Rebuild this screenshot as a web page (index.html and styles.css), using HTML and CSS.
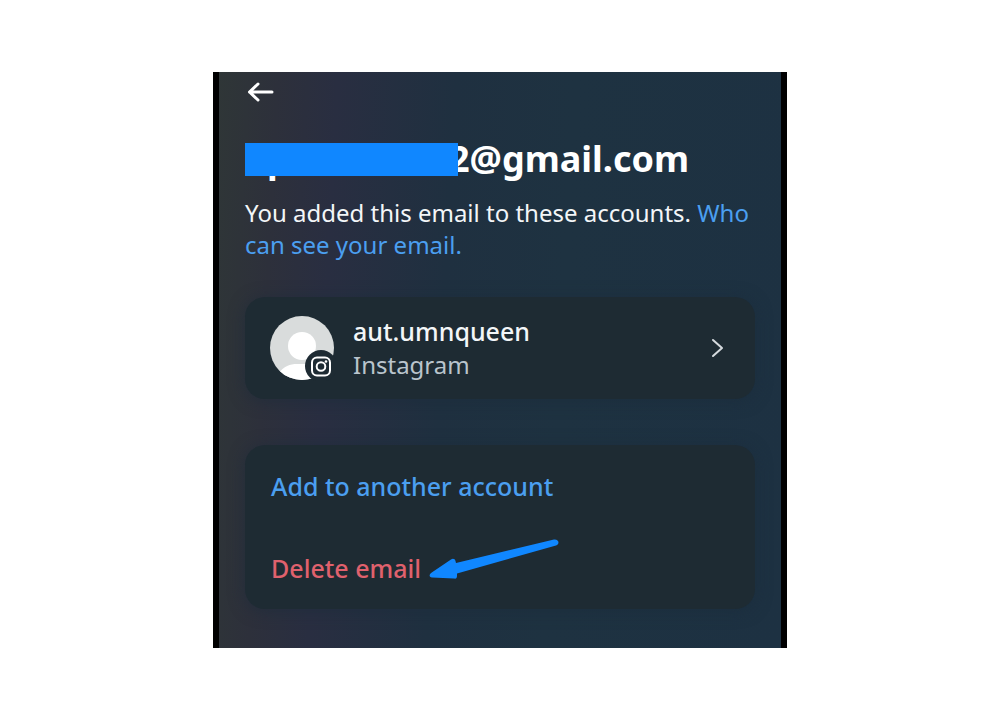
FILE: index.html
```html
<!DOCTYPE html>
<html lang="en">
<head>
    <meta charset="UTF-8">
    <title>Email</title>
    <link rel="stylesheet" href="styles.css">
</head>
<body>
<main class="screen">

    <button class="back" type="button" aria-label="Back">
        <svg width="30" height="24" viewBox="0 0 30 24">
            <path d="M27 12H4.500M13 4L4.500 12L13 20"/>
        </svg>
    </button>

    <h1 class="email"><span class="mask">p</span><span class="domain">2@gmail.com</span></h1>
    <p class="desc">You added this email to these accounts. <a href="#">Who can see your email.</a></p>

    <a class="card account" href="#">
        <svg class="avatar" width="66" height="66" viewBox="0 -1 66 66">
            <defs>
                <clipPath id="face"><circle cx="32" cy="32" r="32"/></clipPath>
            </defs>
            <g clip-path="url(#face)">
                <rect width="64" height="64" fill="#d9dcdc"/>
                <circle cx="32" cy="30" r="14" fill="#fff"/>
                <path d="M8 58C14 50 20 48 27 48H40C48 48 54 52 58 64H8Z" fill="#fff"/>
            </g>
            <circle cx="51" cy="50" r="16" fill="#1e2b33"/>
            <rect x="42" y="41.500" width="18" height="18" rx="5" fill="none" stroke="#fff" stroke-width="2"/>
            <circle cx="51" cy="50.500" r="4.300" fill="none" stroke="#fff" stroke-width="2"/>
            <circle cx="56" cy="45.500" r="1.300" fill="#fff"/>
        </svg>
        <span class="info">
            <strong>aut.umnqueen</strong>
            <span>Instagram</span>
        </span>
        <svg class="chevron" width="14" height="20" viewBox="0 0 14 20">
            <path d="M2 2L11 10L2 18"/>
        </svg>
    </a>

    <div class="card actions">
        <button class="add" type="button">Add to another account</button>
        <button class="delete" type="button">Delete email</button>
        <svg class="pointer" width="130" height="42" viewBox="0 0 130 42">
            <path d="M2 34L22 20.500C24 19 26 20 26.500 22L27 24L125 0.500C130 0 131 5 127 6.500L28 34.500V37C28 39 27 40 25 39.500L3 38.500C0 38 0 36 2 34Z"/>
        </svg>
    </div>

</main>
</body>
</html>
```
FILE: styles.css
```css
*{box-sizing: border-box;}
body,h1,p{margin:0;}
body{
    padding: 72px 24px;
    background-color: #fff;
    font-family: "Noto Sans", sans-serif;
    color: #f3f6f8;
}
a{color: #4b9ff0;text-decoration: none;}
button{
    padding: 0;
    border: none;
    background: none;
    font-family: inherit;
    cursor: pointer;
}

.screen{
    max-width: 574px;
    margin: 0 auto;
    padding: 8px 26px 39px;
    border: solid #000;
    border-width: 0 6px;
    background: linear-gradient(93deg, #2f3637 0%, #2d303b 10%, #292e41 20%, #1f3040 40%, #1e3241 60%, #1d3142 100%);
}
.back{
    display: block;
    height: 24px;
}
.back svg{
    display: block;
    fill: none;
    stroke: #fff;
    stroke-width: 3;
    stroke-linecap: round;
    stroke-linejoin: round;
}

.email{
    display: flex;
    margin-top: 30px;
    font-size: 36px;
    line-height: 50px;
    font-weight: 700;
    color: #fff;
}
/* covers the private part of the address */
.mask{
    position: relative;
    z-index: 1;
    width: 213px;
    padding-left: 22px;
}
.mask::after{
    content: "";
    position: absolute;
    top: 9px;
    left: 0;
    width: 100%;
    height: 33px;
    background-color: #1087ff;
}
.domain{
    margin-left: -9px;
}
.desc{
    margin-top: 13px;
    font-size: 24px;
    line-height: 32px;
}

.card{
    border-radius: 20px;
    background-color: #1e2b33;
    box-shadow: 0 2px 16px rgba(26,43,58,.6);
}
.account{
    display: flex;
    align-items: center;
    margin-top: 36px;
    padding: 18px 30px 18px 25px;
    color: #f3f6f8;
}
.avatar{
    flex: none;
}
.info{
    flex: 1;
    display: flex;
    flex-direction: column;
    margin-left: 17px;
    font-size: 24px;
    line-height: 33px;
    color: #b9c4cc;
}
.info strong{
    font-size: 25px;
    font-weight: 500;
    color: #f3f6f8;
}
.chevron{
    fill: none;
    stroke: #d5dade;
    stroke-width: 2;
    stroke-linecap: round;
    stroke-linejoin: round;
}

.actions{
    position: relative;
    margin-top: 46px;
}
.actions button{
    display: block;
    width: 100%;
    padding: 0 26px;
    font-size: 25px;
    line-height: 82px;
    font-weight: 500;
    text-align: left;
}
.actions .add{
    color: #4b9ff0;
}
.actions .delete{
    color: #e0616d;
}
.pointer{
    position: absolute;
    left: 184px;
    bottom: 28px;
    fill: #1087ff;
}
```
